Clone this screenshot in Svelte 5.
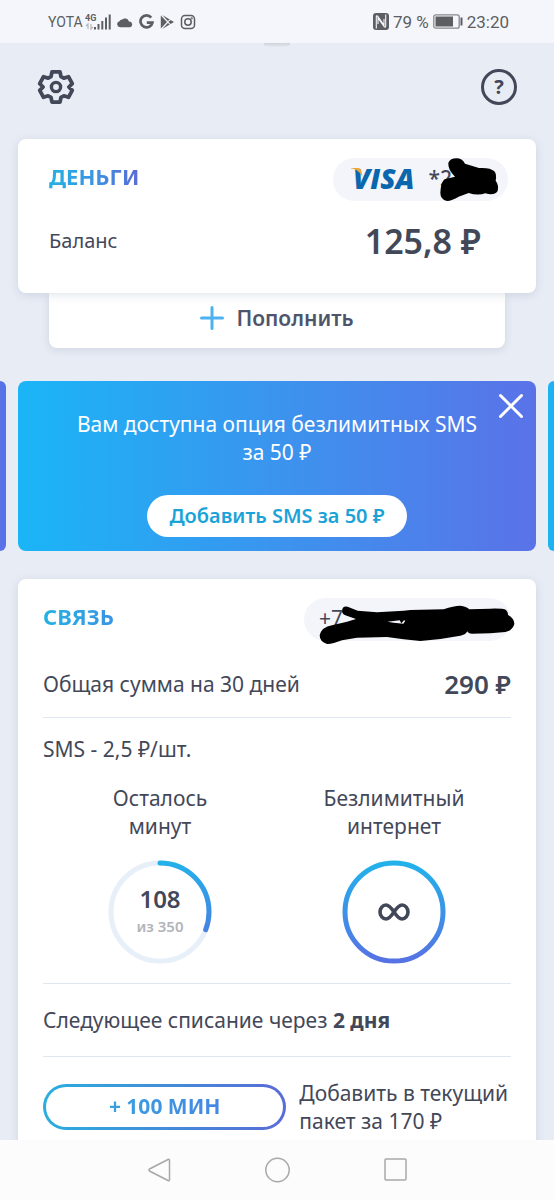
<script>
  const radius = 49;
  const circumference = 2 * Math.PI * radius;

  let minutesLeft = 108;
  let minutesTotal = 350;
  let bannerVisible = true;

  $: dash = (minutesLeft / minutesTotal) * circumference;
</script>

<div class="screen">
  <div class="status-bar">
    <div class="status-group">
      <span class="carrier">YOTA</span>
      <svg class="signal" width="26" height="18" viewBox="0 0 26 18">
        <text x="0" y="8" font-size="9" font-weight="700" fill="#5c5e62">4G</text>
        <path d="M3 16v-5l-2 2M6 11v5l2-2" fill="none" stroke="#b5b7bc" stroke-width="1.2" />
        <path d="M10 14v2.500M13.500 11v5.500M17.300 8v8.500M21 4.500v12M24.700 1.500v15" stroke="#5c5e62" stroke-width="2" />
      </svg>
      <svg width="16" height="18" viewBox="0 0 16 18">
        <path d="M3.200 14.200a3 3 0 0 1-.8-5.900 3.200 3.200 0 0 1 2.800-1.900 4.200 4.200 0 0 1 6.700 2A3 3 0 0 1 13.200 14.200z" fill="#5c5e62" />
      </svg>
      <svg width="15" height="18" viewBox="0 0 15 18">
        <path d="M12.200 4.600A6 6 0 1 0 13.400 9.600H7.800" fill="none" stroke="#5c5e62" stroke-width="2.700" />
      </svg>
      <svg width="14" height="18" viewBox="0 0 14 18">
        <path d="M.8 2.500v13L7 9zM2.200 2l5.700 6 1.900-1.600zM2.200 16l5.700-6 1.900 1.600zM10.600 6.900L8.400 9l2.200 2.100L14 9z" fill="#5c5e62" />
      </svg>
      <svg width="16" height="18" viewBox="0 0 16 18" fill="none" stroke="#5c5e62" stroke-width="1.500">
        <rect x="1.500" y="2.500" width="13" height="13" rx="3.500" />
        <circle cx="8" cy="9" r="3.200" />
        <circle cx="11.700" cy="5.300" r=".4" />
      </svg>
    </div>
    <div class="status-group right">
      <svg width="16" height="17" viewBox="0 0 16 17">
        <rect width="16" height="17" rx="3" fill="#5c5e62" />
        <path d="M3.300 15.500V4Q3.300 2 5 3.500l6 8.500V6M12.700 1.500V13q0 2-1.700.5L5 5v6" fill="none" stroke="#f5f6fb" stroke-width="1.100" />
      </svg>
      <span>79 %</span>
      <svg width="30" height="15" viewBox="0 0 30 15">
        <rect x=".8" y=".8" width="25.400" height="13.400" rx="2" fill="none" stroke="#85878b" stroke-width="1.300" />
        <rect x="2.500" y="2.500" width="17.500" height="10" fill="#5c5e62" />
        <path d="M28.500 3.500v8" stroke="#5c5e62" stroke-width="2" />
      </svg>
      <span>23:20</span>
    </div>
    <div class="handle"></div>
  </div>

  <main>
    <header>
      <button class="icon-button" aria-label="Настройки">
        <svg width="38" height="38" viewBox="0 0 38 38" fill="none" stroke="#434859" stroke-width="4" stroke-linejoin="round">
          <path d="M14.800 3h8.400l1.100 5 3 1.700 4.900-1.500 4 7.200-3.600 3.600 3.600 3.600-4 7.200-4.900-1.500-3 1.700-1.100 5h-8.400l-1.100-5-3-1.700-4.900 1.500-4-7.200L5.400 19l-3.600-3.600 4-7.200 4.900 1.500 3-1.700z" transform="translate(1 1) scale(.947)" />
          <circle cx="19" cy="19" r="4.600" stroke-width="3.400" />
        </svg>
      </button>
      <button class="icon-button help" aria-label="Помощь">?</button>
    </header>

    <section class="card money">
      <div class="card-head">
        <h2>ДЕНЬГИ</h2>
        <div class="pill card-pill">
          <span class="visa">VISA
            <svg width="12" height="9" viewBox="0 0 12 9"><path d="M0 0h7c2 0 3 1 3.400 3L11.500 9C9 4 5 1 0 .6z" fill="#e9a63c" /></svg>
          </span>
          <span class="mask">*2</span>
          <svg class="scribble" viewBox="168 84 525 129">
            <path d="M514 98Q520 85 538 85T564 101L606 114Q640 112 652 124 660 134 656 152 666 165 662 183 652 198 625 190 602 198 575 189L545 200Q525 212 510 213 490 208 490 188 492 155 503 148L534 140Q512 118 514 98z" />
          </svg>
        </div>
      </div>
      <div class="balance">
        <span>Баланс</span>
        <strong>125,8 ₽</strong>
      </div>
    </section>
    <button class="top-up">
      <svg width="24" height="24" viewBox="0 0 24 24"><path d="M12 1.500v21M1.500 12h21" stroke="#4db1f2" stroke-width="3" stroke-linecap="round" /></svg>
      Пополнить
    </button>

    {#if bannerVisible}
      <div class="carousel">
        <div class="peek previous"></div>
        <section class="banner">
          <p>Вам доступна опция безлимитных SMS за 50 ₽</p>
          <button class="banner-action">Добавить SMS за 50 ₽</button>
          <button class="close" aria-label="Закрыть" on:click={() => (bannerVisible = false)}>
            <svg width="26" height="26" viewBox="0 0 26 26"><path d="M2.500 2.500l21 21M23.500 2.500l-21 21" stroke="#fff" stroke-width="3" stroke-linecap="round" /></svg>
          </button>
        </section>
        <div class="peek next"></div>
      </div>
    {/if}

    <section class="card connection">
      <div class="card-head">
        <h2>СВЯЗЬ</h2>
        <div class="pill phone-pill">
          <span>+7</span>
          <svg class="scribble" viewBox="81 81 621 129">
            <path fill-rule="evenodd" d="M195 120Q196 104 212 107L242 119 300 124 380 119 400 117 500 115Q530 104 550 104 568 106 577 115L640 113Q680 112 687 117 694 124 693 132 713 143 712 160 705 180 685 183L640 187 585 188Q574 188 571 181 565 192 550 194L490 204 430 210 380 205 330 198 240 200 195 208Q165 220 150 219 128 212 128 193 134 168 165 163L210 152 237 144 205 133Q195 128 195 120zM331 152L368 148 373 157 381 148 385 149 379 158 350 155z" />
          </svg>
        </div>
      </div>
      <div class="total">
        <span>Общая сумма на 30 дней</span>
        <strong>290 ₽</strong>
      </div>
      <div class="usage">
        <p>SMS - 2,5 ₽/шт.</p>
        <div class="meters">
          <div class="meter">
            <h3>Осталось<br />минут</h3>
            <div class="ring">
              <svg width="104" height="104" viewBox="0 0 104 104" fill="none" stroke-width="5">
                <defs>
                  <linearGradient id="arc" x1="104" y1="0" x2="28" y2="0" gradientUnits="userSpaceOnUse">
                    <stop offset="0" stop-color="#22b2ea" />
                    <stop offset="1" stop-color="#4a7fe0" />
                  </linearGradient>
                </defs>
                <circle cx="52" cy="52" r={radius} stroke="#e7eff8" />
                <circle
                  cx="52"
                  cy="52"
                  r={radius}
                  stroke="url(#arc)"
                  stroke-linecap="round"
                  stroke-dasharray="{dash} {circumference}"
                  transform="rotate(-90 52 52)"
                />
              </svg>
              <div class="ring-label">
                <strong>{minutesLeft}</strong>
                <small>из {minutesTotal}</small>
              </div>
            </div>
          </div>
          <div class="meter">
            <h3>Безлимитный<br />интернет</h3>
            <div class="ring">
              <svg width="104" height="104" viewBox="0 0 104 104" fill="none">
                <defs>
                  <linearGradient id="full" x1="0" y1="0" x2="0" y2="1">
                    <stop offset="0" stop-color="#22b2ea" />
                    <stop offset="1" stop-color="#5672e4" />
                  </linearGradient>
                </defs>
                <circle cx="52" cy="52" r={radius} stroke="url(#full)" stroke-width="5" />
                <path d="M52 52C48 46 46 45 44 45a6 7 0 0 0 0 14c2 0 4-1 8-7s6-7 8-7a6 7 0 0 1 0 14c-2 0-4-1-8-7z" stroke="#434859" stroke-width="3.600" />
              </svg>
            </div>
          </div>
        </div>
      </div>
      <p class="next-charge">Следующее списание через <b>2 дня</b></p>
      <div class="add-minutes">
        <button><span>+ 100 МИН</span></button>
        <p>Добавить в текущий пакет за 170 ₽</p>
      </div>
    </section>
  </main>

  <nav>
    <button aria-label="Назад">
      <svg width="25" height="26" viewBox="0 0 25 26"><path d="M21 2.500q1.500-.8 1.500 1v19q0 1.800-1.500 1L2.500 14q-1.200-1 0-2z" /></svg>
    </button>
    <button aria-label="Домой">
      <svg width="25" height="26" viewBox="0 0 25 26"><circle cx="12.500" cy="13" r="11.700" /></svg>
    </button>
    <button aria-label="Последние приложения">
      <svg width="25" height="26" viewBox="0 0 25 26"><rect x="2" y="2" width="21" height="21" rx="1" /></svg>
    </button>
  </nav>
</div>

<style>
  :global(body) {
    margin: 0;
    background: #e8ecf5;
  }

  .screen {
    display: flex;
    flex-direction: column;
    height: 100vh;
    font-family: "Noto Sans", "Open Sans", sans-serif;
    font-size: 21px;
    line-height: 28px;
    color: #434859;
    background: #e8ecf5;
  }

  .screen * {
    box-sizing: border-box;
  }

  button {
    display: flex;
    align-items: center;
    justify-content: center;
    padding: 0;
    border: 0;
    background: none;
    font: inherit;
    color: inherit;
    cursor: pointer;
  }

  svg {
    display: block;
    flex-shrink: 0;
  }

  p,
  h2,
  h3 {
    margin: 0;
  }

  strong {
    font-weight: 600;
  }

  .status-bar {
    position: relative;
    display: flex;
    align-items: center;
    justify-content: space-between;
    flex-shrink: 0;
    height: 43px;
    padding: 0 45px 0 48px;
    background: #f5f6fb;
    font-family: Roboto, sans-serif;
    font-size: 17px;
    color: #5c5e62;
  }

  .status-group {
    display: flex;
    align-items: center;
    gap: 6px;
  }

  .status-group.right {
    gap: 4px;
  }

  .carrier {
    font-size: 14px;
  }

  .signal {
    margin-left: -4px;
  }

  .handle {
    position: absolute;
    top: 100%;
    left: 50%;
    width: 26px;
    height: 4px;
    margin-left: -13px;
    border-radius: 0 0 50% 50%;
    background: linear-gradient(#cfd3da, #e4e8f0);
  }

  main {
    flex: 1;
    min-height: 0;
    overflow-y: auto;
    scrollbar-width: none;
  }

  header {
    display: flex;
    align-items: center;
    justify-content: space-between;
    padding: 25px 37px 33px;
  }

  .icon-button {
    width: 38px;
    height: 38px;
  }

  .help {
    width: 36px;
    height: 36px;
    border: 3px solid #434859;
    border-radius: 50%;
    font-size: 20px;
    font-weight: 700;
  }

  .card {
    position: relative;
    margin: 0 18px;
    border-radius: 8px;
    background: #fff;
    box-shadow: 0 2px 10px rgba(100, 120, 150, 0.2);
  }

  .card-head {
    display: flex;
    align-items: flex-start;
    justify-content: space-between;
  }

  h2 {
    padding: 4px 0;
    font-size: 22px;
    font-weight: 700;
    background: linear-gradient(90deg, #22b2e2, #3b94e4 50%, #5a6bd6);
    background-clip: text;
    color: transparent;
  }

  .connection h2 {
    background-image: linear-gradient(90deg, #22b2e2, #3b94e4);
  }

  .pill {
    position: relative;
    display: flex;
    align-items: center;
    height: 43px;
    padding-bottom: 3px;
    border-radius: 22px;
    background: #f4f5fa;
  }

  .scribble {
    position: absolute;
    top: 0;
    left: 0;
    width: 100%;
    height: 100%;
    overflow: visible;
    fill: #000;
  }

  .money {
    padding: 19px 28px 32px 31px;
  }

  .card-pill {
    width: 175px;
    padding-left: 20px;
    gap: 14px;
  }

  .visa {
    position: relative;
    font-family: "Open Sans", sans-serif;
    font-size: 28px;
    font-style: italic;
    font-weight: 800;
    color: #0a66ad;
  }

  .visa svg {
    position: absolute;
    top: 4px;
    left: -2px;
  }

  .mask {
    font-weight: 500;
  }

  .balance {
    display: flex;
    align-items: center;
    justify-content: space-between;
    margin-top: 20px;
    padding-right: 27px;
    font-size: 20px;
    line-height: 40px;
  }

  .balance strong {
    font-size: 34px;
  }

  .top-up {
    width: calc(100% - 98px);
    height: 55px;
    margin: 0 49px;
    padding-bottom: 5px;
    gap: 12px;
    border-radius: 0 0 8px 8px;
    background: #fff;
    box-shadow: 0 2px 8px rgba(100, 120, 150, 0.2);
    font-weight: 600;
    color: #4e556b;
  }

  .carousel {
    display: grid;
    grid-template-columns: 6px 1fr 6px;
    gap: 12px;
    margin: 33px 0 28px;
  }

  .peek.previous {
    border-radius: 0 8px 8px 0;
    background: #5a72e8;
  }

  .peek.next {
    border-radius: 8px 0 0 8px;
    background: #1fb2f2;
  }

  .banner {
    position: relative;
    display: flex;
    flex-direction: column;
    align-items: center;
    padding: 29px 54px 14px;
    border-radius: 8px;
    background: linear-gradient(90deg, #1ab5f6, #3b94ee 50%, #5a72e8);
    color: #fff;
    text-align: center;
  }

  .banner-action {
    height: 42px;
    margin-top: 29px;
    padding: 0 22px;
    border-radius: 21px;
    background: #fff;
    font-size: 20px;
    font-weight: 600;
    color: #1ba3d8;
  }

  .close {
    position: absolute;
    top: 12px;
    right: 12px;
  }

  .connection {
    padding: 19px 25px 30px;
  }

  .phone-pill {
    width: 207px;
    padding-left: 15px;
  }

  .total {
    display: flex;
    align-items: center;
    justify-content: space-between;
    padding: 29px 0 19px;
  }

  .total strong {
    font-size: 26px;
  }

  .usage {
    padding: 17px 0 19px;
    border-top: 1px solid #dfe8f2;
    border-bottom: 1px solid #dfe8f2;
  }

  .meters {
    display: grid;
    grid-template-columns: 1fr 1fr;
    margin-top: 21px;
  }

  .meter {
    display: flex;
    flex-direction: column;
    align-items: center;
    gap: 20px;
    text-align: center;
  }

  h3 {
    font-size: 21px;
    font-weight: 400;
  }

  .ring {
    position: relative;
  }

  .ring-label {
    position: absolute;
    inset: 0;
    display: flex;
    flex-direction: column;
    align-items: center;
    justify-content: center;
  }

  .ring-label strong {
    font-size: 24px;
  }

  .ring-label small {
    font-size: 15px;
    font-weight: 600;
    line-height: 26px;
    color: #b2b4ba;
  }

  .next-charge {
    padding: 22px 0;
    border-bottom: 1px solid #dfe8f2;
  }

  .next-charge b {
    font-weight: 700;
  }

  .add-minutes {
    display: flex;
    align-items: center;
    gap: 13px;
    padding-top: 22px;
  }

  .add-minutes button {
    flex: 0 0 52%;
    height: 46px;
    padding-bottom: 2px;
    border: 3px solid transparent;
    border-radius: 23px;
    background:
      linear-gradient(#fff, #fff) padding-box,
      linear-gradient(90deg, #2aaede, #5a6bd6) border-box;
    font-weight: 700;
  }

  .add-minutes span {
    background: linear-gradient(90deg, #3a9fe0, #4488e4);
    background-clip: text;
    color: transparent;
  }

  nav {
    display: flex;
    align-items: center;
    justify-content: center;
    gap: 93px;
    flex-shrink: 0;
    height: 60px;
    background: #fcfcfd;
  }

  nav svg {
    fill: none;
    stroke: #a8a8aa;
    stroke-width: 1.500;
  }
</style>
